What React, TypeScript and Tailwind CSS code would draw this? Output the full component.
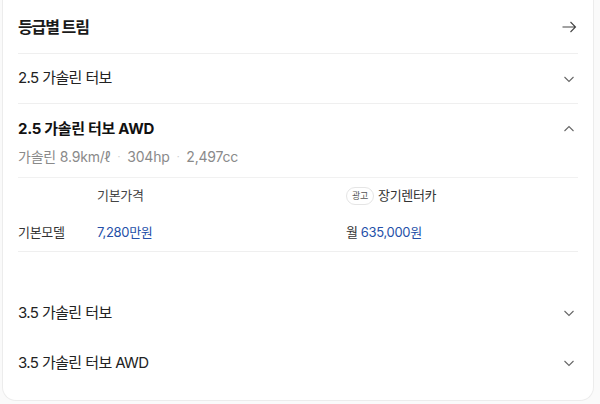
import React from 'react'

const FONT = { fontFamily: 'Inter, "Noto Sans CJK KR", sans-serif' }

const ChevronDown = () => (
  <svg width="14" height="14" viewBox="0 0 14 14" fill="none" stroke="#666" strokeWidth="1.1">
    <path d="M2.5 5l4.5 4.5L11.5 5" />
  </svg>
)

const ChevronUp = () => (
  <svg width="14" height="14" viewBox="0 0 14 14" fill="none" stroke="#666" strokeWidth="1.1">
    <path d="M2.5 9l4.5-4.5L11.5 9" />
  </svg>
)

const ArrowRight = () => (
  <svg width="16" height="16" viewBox="0 0 16 16" fill="none" stroke="#444" strokeWidth="1.1">
    <path d="M1.5 8h13M9.5 3l5 5-5 5" />
  </svg>
)

interface TrimRowProps {
  name: string
  divider?: boolean
}

const TrimRow: React.FC<TrimRowProps> = ({ name, divider }) => (
  <div className={`flex items-center justify-between h-[50px] ${divider ? 'border-b border-[#efefef]' : ''}`}>
    <span className="text-[15px] text-[#222] tracking-[-0.6px]">{name}</span>
    <span className="mr-[2px]"><ChevronDown /></span>
  </div>
)

export default function App() {
  return (
    <div className="w-[600px] h-[404px] bg-[#fafafa]" style={FONT}>
      <div className="ml-[2px] w-[592px] h-[401px] bg-white border border-t-0 border-[#ececec] rounded-b-[14px] px-[15px]">
        <div className="flex items-center justify-between h-[54px] border-b border-[#efefef]">
          <span className="text-[16px] font-bold text-[#1a1a1a] tracking-[-1.1px] pt-[1px]">등급별 트림</span>
          <span className="mr-[1px]"><ArrowRight /></span>
        </div>

        <TrimRow name="2.5 가솔린 터보" divider />

        <div className="pb-[36px]">
          <div className="flex items-center justify-between pt-[10px] h-[40px]">
            <span className="text-[15px] font-bold text-[#111] tracking-[-0.3px]">2.5 가솔린 터보 AWD</span>
            <span className="mr-[2px]"><ChevronUp /></span>
          </div>
          <div className="flex items-center gap-[7px] text-[14px] text-[#8a8a8a] tracking-[-0.2px] h-[34px] pb-[8px] border-b border-[#f1f1f1]">
            <span>가솔린 8.9km/ℓ</span>
            <span className="text-[#ccc] text-[10px]">·</span>
            <span>304hp</span>
            <span className="text-[#ccc] text-[10px]">·</span>
            <span>2,497cc</span>
          </div>
          <div className="grid grid-cols-[79px_249px_1fr] text-[13px] tracking-[-0.3px] border-b border-[#efefef]">
            <div className="h-[36px]" />
            <div className="h-[36px] flex items-center text-[#444]">기본가격</div>
            <div className="h-[36px] flex items-center gap-[4px] text-[#333]">
              <span className="h-[18px] px-[5px] flex items-center rounded-full border border-[#e5e5e5] text-[9px] text-[#555]">광고</span>
              <span className="text-[13px]">장기렌터카</span>
            </div>
            <div className="h-[37px] flex items-center text-[#333]">기본모델</div>
            <div className="h-[37px] flex items-center text-[#2550a8]">7,280만원</div>
            <div className="h-[37px] flex items-center text-[#333] gap-[3px]">
              월 <span className="text-[#2550a8]">635,000원</span>
            </div>
          </div>
        </div>

        <TrimRow name="3.5 가솔린 터보" />
        <TrimRow name="3.5 가솔린 터보 AWD" />
      </div>
    </div>
  )
}
